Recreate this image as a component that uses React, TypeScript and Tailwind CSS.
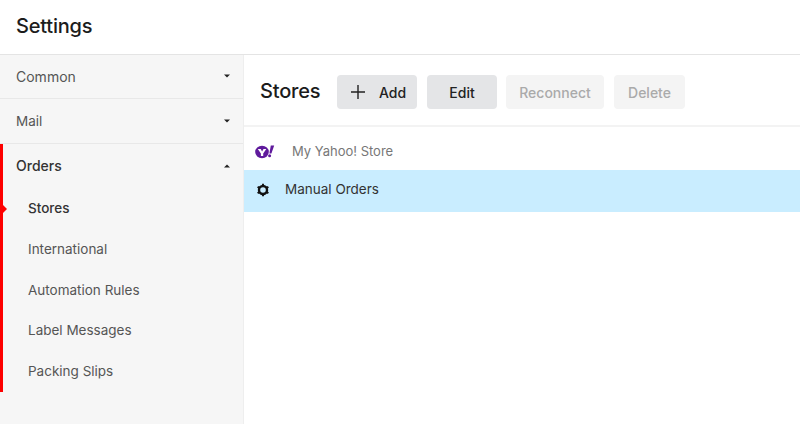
const subItems = ["Stores", "International", "Automation Rules", "Label Messages", "Packing Slips"];

const Caret = ({ up = false }: { up?: boolean }) => (
  <svg width="6" height="4" viewBox="0 0 6 4" className="text-[#222]">
    <path d={up ? "M0 3.5 L3 0.5 L6 3.5 Z" : "M0 0.5 L6 0.5 L3 3.5 Z"} fill="currentColor" />
  </svg>
);

const YahooLogo = () => (
  <svg width="20" height="16" viewBox="0 0 20 16">
    <ellipse cx="7" cy="8" rx="6.8" ry="6.2" fill="#5f1a9c" />
    <path d="M2.8 5h2.9l1.4 2.6L8.5 5h2.8L8.2 9.4V12H5.9V9.4z" fill="#fff" />
    <path d="M15.8 1.5h3.4L16.4 9.4h-2z" fill="#5f1a9c" />
    <circle cx="14.6" cy="11.8" r="1.5" fill="#5f1a9c" />
  </svg>
);

// round cog, ring with short teeth
const Gear = () => (
  <svg width="14" height="14" viewBox="0 0 14 14" className="text-[#111]">
    <circle cx="7" cy="7" r="4" fill="none" stroke="currentColor" strokeWidth="2.4" />
    <g stroke="currentColor" strokeWidth="1.9">
      <path d="M7 0.7v2M7 11.3v2" />
      <path d="M1.6 3.9l1.7 1M10.7 9.1l1.7 1" />
      <path d="M1.6 10.1l1.7-1M10.7 4.9l1.7-1" />
    </g>
  </svg>
);

const App = () => {
  return (
    <div className="w-[800px] h-[424px] overflow-hidden bg-white flex flex-col font-['Inter',sans-serif]">
      <header className="h-[55px] shrink-0 flex items-center pl-4 border-b border-[#e4e4e4]">
        <h1 className="text-[20px] font-medium text-[#1c1c1c] tracking-[-0.2px] pb-[2px]">Settings</h1>
      </header>

      <div className="flex flex-1 min-h-0">
        <aside className="w-[244px] shrink-0 bg-[#f6f6f6] border-r border-[#eeeeee]">
          <div className="h-[44px] flex items-center justify-between pl-4 pr-[13px] pb-[1px] border-b border-[#e8e8e8] text-[14px] text-[#555]">
            <span>Common</span>
            <Caret />
          </div>
          <div className="h-[45px] flex items-center justify-between pl-4 pr-[13px] border-b border-[#e8e8e8] text-[13.5px] text-[#555]">
            <span>Mail</span>
            <Caret />
          </div>
          <div className="h-[248px] border-l-[3px] border-[#fe0000] relative">
            <div className="h-[43px] flex items-center justify-between pl-[13px] pr-[13px] text-[14px] font-medium text-[#333]">
              <span>Orders</span>
              <Caret up />
            </div>
            <ul className="pl-[25px] pt-[1px] flex flex-col">
              {subItems.map((item, i) => (
                <li
                  key={item}
                  className={
                    i === 0
                      ? "h-[41px] flex items-center text-[13.5px] font-medium text-[#333]"
                      : "h-[40.5px] flex items-center text-[13.5px] text-[#555]"
                  }
                >
                  {item}
                </li>
              ))}
            </ul>
            <span className="absolute left-0 top-[61px] w-0 h-0 border-y-[4px] border-y-transparent border-l-[4px] border-l-[#fe0000]" />
          </div>
        </aside>

        <main className="flex-1 min-w-0">
          <div className="h-[72px] flex items-center pl-4 pt-[4px] border-b-2 border-[#f3f3f3]">
            <h2 className="text-[20px] font-medium text-[#1c1c1c] tracking-[-0.2px] w-[77px] pb-[2px]">Stores</h2>
            <div className="flex gap-[10px] text-[14px] font-medium">
              <button className="w-[80px] h-[34px] rounded bg-[#e4e5e7] text-[#222] flex items-center justify-center gap-[14px] pl-[3px]">
                <svg width="14" height="14" viewBox="0 0 14 14" stroke="#222" strokeWidth="1.4">
                  <path d="M7 0v14M0 7h14" />
                </svg>
                Add
              </button>
              <button className="w-[70px] h-[34px] rounded bg-[#e4e5e7] text-[#222]">Edit</button>
              <button className="w-[98px] h-[34px] rounded bg-[#f4f4f4] text-[#aaaaaa] ml-[-1px]">Reconnect</button>
              <button className="w-[71px] h-[34px] rounded bg-[#f4f4f4] text-[#aaaaaa]">Delete</button>
            </div>
          </div>

          <div className="h-[43px] flex items-center pl-[11px] pt-[7px] text-[13px] text-[#777]">
            <YahooLogo />
            <span className="ml-[17px]">My Yahoo! Store</span>
          </div>
          <div className="h-[42px] flex items-center pl-[12px] pb-[3px] bg-[#c9edff] text-[13.5px] text-[#333]">
            <Gear />
            <span className="ml-[15px]">Manual Orders</span>
          </div>
        </main>
      </div>
    </div>
  );
};

export default App;
